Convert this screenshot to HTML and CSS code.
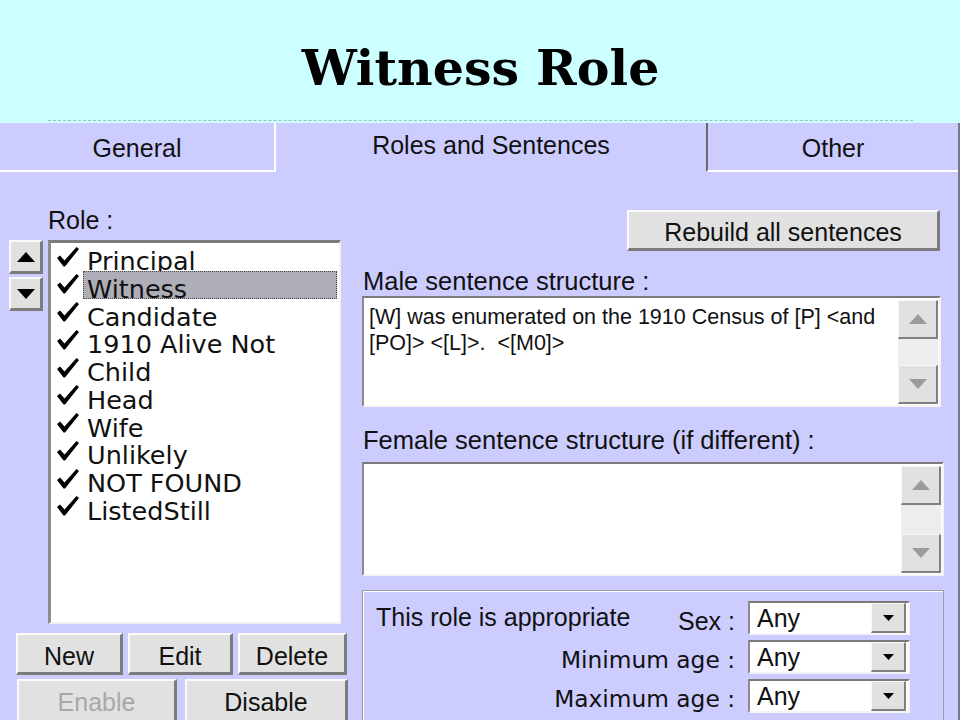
FILE: index.html
```html
<!DOCTYPE html>
<html>
<head>
<meta charset="utf-8">
<title>Witness Role</title>
<link rel="stylesheet" href="styles.css">
</head>
<body>
<div class="slide">
  <header class="top">
    <div class="top-inner"><h1 class="title">Witness Role</h1></div>
  </header>
  <section class="dialog">
    <div class="tabs">
      <div class="tab tab-general">General</div>
      <div class="tab tab-active">Roles and Sentences</div>
      <div class="tab tab-other">Other</div>
    </div>
    <div class="body">
      <div class="left">
        <div class="role-label">Role :</div>
        <div class="list-row">
          <div class="arrows">
            <div class="btn arrow-btn"><svg width="18" height="10" viewBox="0 0 18 10"><polygon points="0,10 9,0 18,10" fill="#000"/></svg></div>
            <div class="btn arrow-btn"><svg width="18" height="10" viewBox="0 0 18 10"><polygon points="0,0 18,0 9,10" fill="#000"/></svg></div>
          </div>
          <div class="listbox">
            <div class="item"><svg class="check" width="22" height="20" viewBox="0 0 22 20"><path d="M0 11 L3 8.5 L7.5 13.5 L19.5 0 L22 2 L8 19.5 L6.5 19.5 Z" fill="#000"/></svg><span class="item-text">Principal</span></div>
            <div class="item"><svg class="check" width="22" height="20" viewBox="0 0 22 20"><path d="M0 11 L3 8.5 L7.5 13.5 L19.5 0 L22 2 L8 19.5 L6.5 19.5 Z" fill="#000"/></svg><span class="item-text selected">Witness</span></div>
            <div class="item"><svg class="check" width="22" height="20" viewBox="0 0 22 20"><path d="M0 11 L3 8.5 L7.5 13.5 L19.5 0 L22 2 L8 19.5 L6.5 19.5 Z" fill="#000"/></svg><span class="item-text">Candidate</span></div>
            <div class="item"><svg class="check" width="22" height="20" viewBox="0 0 22 20"><path d="M0 11 L3 8.5 L7.5 13.5 L19.5 0 L22 2 L8 19.5 L6.5 19.5 Z" fill="#000"/></svg><span class="item-text">1910 Alive Not</span></div>
            <div class="item"><svg class="check" width="22" height="20" viewBox="0 0 22 20"><path d="M0 11 L3 8.5 L7.5 13.5 L19.5 0 L22 2 L8 19.5 L6.5 19.5 Z" fill="#000"/></svg><span class="item-text">Child</span></div>
            <div class="item"><svg class="check" width="22" height="20" viewBox="0 0 22 20"><path d="M0 11 L3 8.5 L7.5 13.5 L19.5 0 L22 2 L8 19.5 L6.5 19.5 Z" fill="#000"/></svg><span class="item-text">Head</span></div>
            <div class="item"><svg class="check" width="22" height="20" viewBox="0 0 22 20"><path d="M0 11 L3 8.5 L7.5 13.5 L19.5 0 L22 2 L8 19.5 L6.5 19.5 Z" fill="#000"/></svg><span class="item-text">Wife</span></div>
            <div class="item"><svg class="check" width="22" height="20" viewBox="0 0 22 20"><path d="M0 11 L3 8.5 L7.5 13.5 L19.5 0 L22 2 L8 19.5 L6.5 19.5 Z" fill="#000"/></svg><span class="item-text">Unlikely</span></div>
            <div class="item"><svg class="check" width="22" height="20" viewBox="0 0 22 20"><path d="M0 11 L3 8.5 L7.5 13.5 L19.5 0 L22 2 L8 19.5 L6.5 19.5 Z" fill="#000"/></svg><span class="item-text">NOT FOUND</span></div>
            <div class="item"><svg class="check" width="22" height="20" viewBox="0 0 22 20"><path d="M0 11 L3 8.5 L7.5 13.5 L19.5 0 L22 2 L8 19.5 L6.5 19.5 Z" fill="#000"/></svg><span class="item-text">ListedStill</span></div>
          </div>
        </div>
        <div class="btn-row row1">
          <div class="btn b-new">New</div>
          <div class="btn b-edit">Edit</div>
          <div class="btn b-delete">Delete</div>
        </div>
        <div class="btn-row row2">
          <div class="btn b-enable disabled">Enable</div>
          <div class="btn b-disable">Disable</div>
        </div>
      </div>
      <div class="right">
        <div class="rebuild-wrap"><div class="btn rebuild">Rebuild all sentences</div></div>
        <div class="label label-male">Male sentence structure :</div>
        <div class="textbox male">
          <div class="text">[W] was enumerated on the 1910 Census of [P] &lt;and [PO]&gt; &lt;[L]&gt;.  &lt;[M0]&gt;</div>
          <div class="vscroll">
            <div class="sbtn"><svg width="18" height="10" viewBox="0 0 18 10"><polygon points="0,10 9,0 18,10" fill="#9b9b9b"/></svg></div>
            <div class="track"></div>
            <div class="sbtn"><svg width="18" height="10" viewBox="0 0 18 10"><polygon points="0,0 18,0 9,10" fill="#9b9b9b"/></svg></div>
          </div>
        </div>
        <div class="label label-female">Female sentence structure (if different) :</div>
        <div class="textbox female">
          <div class="text"></div>
          <div class="vscroll">
            <div class="sbtn"><svg width="18" height="10" viewBox="0 0 18 10"><polygon points="0,10 9,0 18,10" fill="#9b9b9b"/></svg></div>
            <div class="track"></div>
            <div class="sbtn"><svg width="18" height="10" viewBox="0 0 18 10"><polygon points="0,0 18,0 9,10" fill="#9b9b9b"/></svg></div>
          </div>
        </div>
        <div class="group">
          <div class="glabel first">
            <span class="appropriate">This role is appropriate</span>
            <span class="sex">Sex :</span>
          </div>
          <div class="combo"><span class="combo-val">Any</span><span class="drop"><svg width="11" height="6" viewBox="0 0 11 6"><polygon points="0,0 11,0 5.5,6" fill="#000"/></svg></span></div>
          <div class="glabel age">Minimum age :</div>
          <div class="combo"><span class="combo-val">Any</span><span class="drop"><svg width="11" height="6" viewBox="0 0 11 6"><polygon points="0,0 11,0 5.5,6" fill="#000"/></svg></span></div>
          <div class="glabel age">Maximum age :</div>
          <div class="combo"><span class="combo-val">Any</span><span class="drop"><svg width="11" height="6" viewBox="0 0 11 6"><polygon points="0,0 11,0 5.5,6" fill="#000"/></svg></span></div>
        </div>
      </div>
    </div>
  </section>
</div>
</body>
</html>
```
FILE: styles.css
```css
* { box-sizing: border-box; }
html, body { margin: 0; padding: 0; }
body {
  width: 960px;
  height: 720px;
  overflow: hidden;
  background: #ccffff;
  font-family: "Liberation Sans", Arial, sans-serif;
  color: #111;
}
.slide {
  width: 960px;
  height: 720px;
  display: flex;
  flex-direction: column;
  overflow: hidden;
}
.top {
  height: 123px;
  flex: none;
  background: #ccffff;
  padding: 0 47px 0 48px;
}
.top-inner {
  height: 121px;
  border-bottom: 1px dashed #a3bcc6;
  display: flex;
  justify-content: center;
}
.title {
  margin: 0;
  padding-top: 44px;
  font-family: "DejaVu Serif", serif;
  font-weight: bold;
  font-size: 49px;
  line-height: 49px;
  color: #000;
}
.dialog {
  flex: 1;
  min-height: 0;
  background: #ccccff;
  border-right: 2px solid #77778a;
  display: flex;
  flex-direction: column;
}
.tabs {
  display: flex;
  height: 49px;
  flex: none;
}
.tab {
  font-size: 25px;
  display: flex;
  align-items: center;
  justify-content: center;
  color: #111;
}
.tab-general {
  width: 276px;
  border-right: 2px solid #fff;
  border-bottom: 2px solid #fff;
  padding-top: 3px;
}
.tab-active {
  width: 430px;
  padding-bottom: 4px;
}
.tab-other {
  flex: 1;
  border-left: 2px solid #6a6a6a;
  border-bottom: 2px solid #fff;
  padding-top: 3px;
}
.body {
  flex: 1;
  min-height: 0;
  display: grid;
  grid-template-columns: 350px 582px;
  column-gap: 12px;
}
.left {
  display: flex;
  flex-direction: column;
  padding-top: 33px;
}
.role-label {
  margin-left: 48px;
  height: 30px;
  line-height: 30px;
  font-size: 25px;
}
.list-row {
  display: flex;
  margin-top: 5px;
  padding-left: 9px;
  gap: 5px;
}
.arrows {
  width: 34px;
  display: flex;
  flex-direction: column;
  gap: 3px;
}
.btn {
  background: #e1e1e1;
  border-style: solid;
  border-width: 2px 3px 3px 2px;
  border-color: #fbfbfb #7c7c7c #7c7c7c #fbfbfb;
  display: flex;
  align-items: center;
  justify-content: center;
  font-size: 25px;
  color: #111;
}
.arrow-btn {
  height: 34px;
}
.listbox {
  width: 293px;
  height: 384px;
  background: #fff;
  border-style: solid;
  border-width: 3px 2px 2px 3px;
  border-color: #7b7b7b #f2f2f2 #f2f2f2 #8c8c8c;
}
.item {
  height: 27.75px;
  display: flex;
  align-items: flex-start;
}
.check {
  flex: none;
  margin: 3.5px 4px 0 6px;
}
.item-text {
  flex: 1;
  margin-right: 2px;
  height: 100%;
  border: 1px dotted transparent;
  padding-left: 3px;
  line-height: 34px;
  white-space: nowrap;
  font-family: "DejaVu Sans", Verdana, sans-serif;
  font-size: 25.5px;
  color: #111;
}
.item-text.selected {
  background: #aeaeb9;
  border-color: #4a4a4a;
}
.btn-row {
  display: flex;
}
.row1 {
  margin-top: 9px;
  padding-left: 16px;
  gap: 5px;
  height: 42px;
}
.row2 {
  margin-top: 4px;
  padding-left: 17px;
  gap: 8px;
  height: 44px;
}
.row1 .btn { padding-top: 5px; }
.row2 .btn { padding-top: 3px; }
.b-new { width: 107px; }
.b-edit { width: 105px; }
.b-delete { width: 109px; }
.b-enable { width: 160px; }
.b-disable { width: 163px; }
.btn.disabled { color: #a8a8a8; }
.right {
  display: flex;
  flex-direction: column;
}
.rebuild-wrap {
  margin-top: 38px;
  display: flex;
  justify-content: flex-end;
  padding-right: 4px;
}
.rebuild {
  width: 313px;
  height: 41px;
  padding-top: 4px;
}
.label {
  height: 30px;
  line-height: 30px;
  font-size: 25.5px;
  padding-left: 1px;
  white-space: nowrap;
  color: #111;
}
.label-male { margin-top: 15px; }
.label-female { margin-top: 18px; }
.textbox {
  display: flex;
  background: #fff;
  border-style: solid;
  border-width: 2px;
  border-color: #7a7a7a #f4f4f4 #f4f4f4 #8a8a8a;
}
.male { width: 579px; height: 111px; }
.female { width: 582px; height: 114px; margin-top: 7px; }
.text {
  flex: 1;
  padding: 6px 4px 0 5px;
  font-size: 21.5px;
  line-height: 26px;
  white-space: pre-wrap;
  color: #111;
}
.vscroll {
  width: 41px;
  display: flex;
  flex-direction: column;
  padding: 2px 1px 1px 0;
}
.sbtn {
  height: 39px;
  flex: none;
  background: #e1e1e1;
  border-style: solid;
  border-width: 1px 2px 2px 1px;
  border-color: #f8f8f8 #808080 #808080 #f8f8f8;
  display: flex;
  align-items: center;
  justify-content: center;
}
.track {
  flex: 1;
  background: #ededed;
}
.group {
  margin-top: 14px;
  height: 140px;
  border: 1px solid #9a9aa8;
  box-shadow: inset 1px 1px 0 #fff;
  padding: 10px 0 0 13px;
  display: grid;
  grid-template-columns: 359px 162px;
  column-gap: 13px;
  row-gap: 5px;
  grid-auto-rows: 34px;
  align-content: start;
}
.glabel {
  display: flex;
  align-items: center;
  font-size: 25px;
  white-space: nowrap;
  color: #111;
}
.glabel.first {
  justify-content: space-between;
}
.appropriate { padding-bottom: 2px; }
.sex { padding-top: 6px; }
.glabel.age {
  justify-content: flex-end;
  padding-top: 5px;
  font-family: "DejaVu Sans", Verdana, sans-serif;
  font-size: 23.3px;
}
.combo {
  display: flex;
  align-items: stretch;
  background: #fff;
  border-style: solid;
  border-width: 2px;
  border-color: #7a7a7a #f4f4f4 #f4f4f4 #8a8a8a;
}
.combo-val {
  flex: 1;
  padding-left: 7px;
  font-size: 25px;
  line-height: 30px;
}
.drop {
  width: 35px;
  margin-right: 2px;
  background: #e1e1e1;
  border-style: solid;
  border-width: 1px 2px 2px 1px;
  border-color: #f8f8f8 #808080 #808080 #f8f8f8;
  display: flex;
  align-items: center;
  justify-content: center;
}
```
